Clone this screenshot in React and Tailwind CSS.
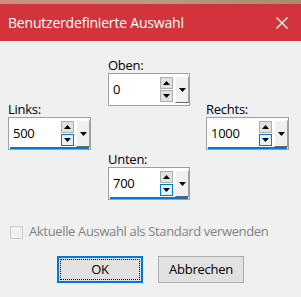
import React from "react";

const Up = () => (
  <svg width="7" height="4" viewBox="0 0 7 4">
    <path d="M3.5 0 L7 4 L0 4 Z" fill="#000" />
  </svg>
);

const Down = () => (
  <svg width="7" height="4" viewBox="0 0 7 4">
    <path d="M0 0 L7 0 L3.5 4 Z" fill="#000" />
  </svg>
);

const SpinBox = ({ value, active }) => {
  return (
    <div className="w-full h-[33px] bg-white border border-[#a0a0a0] flex relative">
      <div className="flex-1 flex items-center pl-[4px] text-[13px] text-black">{value}</div>
      <div className="flex flex-col justify-center gap-[1px] mr-[2px]">
        <div className="w-[13px] h-[12px] bg-[#e1e1e1] border border-[#adadad] flex items-center justify-center">
          <Up />
        </div>
        <div
          className={
            active
              ? "w-[13px] h-[12px] bg-[#e5f1fb] border border-[#0078d7] flex items-center justify-center"
              : "w-[13px] h-[12px] bg-[#e1e1e1] border border-[#adadad] flex items-center justify-center"
          }
        >
          <Down />
        </div>
      </div>
      <div className="w-[14px] my-[2px] bg-[#f0f0f0] border-t border-l border-t-white border-l-white border-r border-b border-r-[#a0a0a0] border-b-[#696969] flex items-center justify-center">
        <Down />
      </div>
      {active && <div className="absolute left-[1px] right-[1px] bottom-0 h-[2px] bg-[#0078d7]" />}
    </div>
  );
};

const Field = ({ label, value, active }) => (
  <div className="w-full">
    <div className="h-[16px] leading-[16px] text-[13px] text-black">{label}</div>
    <SpinBox value={value} active={active} />
  </div>
);

export default function App() {
  return (
    <div
      className="w-[301px] h-[297px] bg-[#f0f0f0] overflow-hidden tracking-[-0.25px]"
      style={{ fontFamily: '"Open Sans", "Noto Sans", sans-serif' }}
    >
      <div className="h-[4px] bg-gradient-to-r from-[#c98e82] via-[#b89a84] to-[#a88c6a]" />
      <div className="h-[37px] bg-[#d1343a] flex items-center justify-between pl-[8px] pr-[13px]">
        <span className="text-white text-[14px] tracking-[-0.2px]">Benutzerdefinierte Auswahl</span>
        <svg width="12" height="12" viewBox="0 0 12 12">
          <path d="M0.5 0.5 L11.5 11.5 M11.5 0.5 L0.5 11.5" stroke="#fff" strokeWidth="1.2" />
        </svg>
      </div>

      <div className="flex pl-[8px] pt-[16px] gap-[17px]">
        <div className="w-[83px] pt-[44px]">
          <Field label="Links:" value="500" active />
        </div>
        <div className="w-[82px]">
          <Field label="Oben:" value="0" />
          <div className="h-[45px]" />
          <Field label="Unten:" value="700" active />
        </div>
        <div className="w-[83px] pt-[44px] ml-[-1px]">
          <Field label="Rechts:" value="1000" active />
        </div>
      </div>

      <div className="flex items-center mt-[22px] pl-[10px] h-[20px]">
        <div className="w-[13px] h-[13px] bg-[#f0f0f0] border border-[#cccccc]" />
        <span className="ml-[6px] text-[13px] text-[#838383] tracking-[-0.35px]">Aktuelle Auswahl als Standard verwenden</span>
      </div>

      <div className="flex justify-center gap-[15px] mt-[14px]">
        <button className="w-[86px] h-[27px] bg-[#e1e1e1] border-2 border-[#0078d7] p-[1px] text-[13px] text-black">
          <div className="w-full h-full border border-dotted border-black flex items-center justify-center">OK</div>
        </button>
        <button className="w-[86px] h-[27px] bg-[#e1e1e1] border border-[#adadad] text-[13px] text-black flex items-center justify-center">
          Abbrechen
        </button>
      </div>
    </div>
  );
}
